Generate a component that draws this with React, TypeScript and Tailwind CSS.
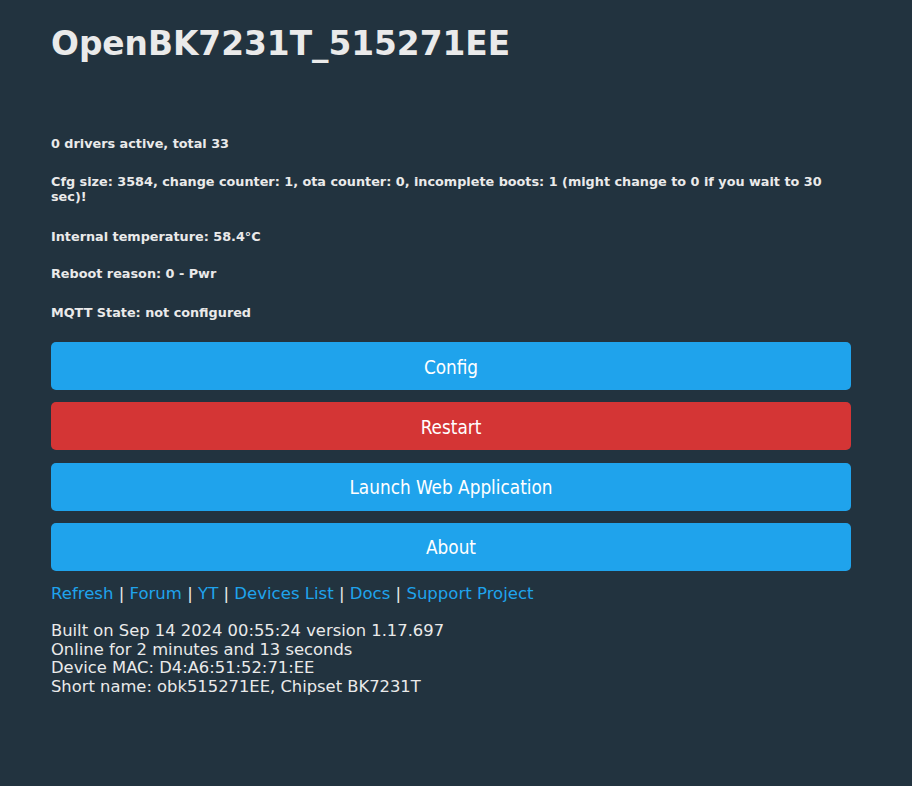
import React from "react";

const sans = { fontFamily: '"DejaVu Sans", Verdana, sans-serif' };
const cond = { fontFamily: '"DejaVu Sans Condensed", "DejaVu Sans", sans-serif' };

function Btn({ label, red }: { label: string; red?: boolean }) {
  return (
    <button
      className={
        "w-full h-[48px] rounded-[5px] text-white text-[18.8px] leading-[48px] pt-[4px] text-center " +
        (red ? "bg-[#d43535]" : "bg-[#1fa3ec]")
      }
      style={cond}
    >
      <span className="block leading-[44px] -mt-[1px]">{label}</span>
    </button>
  );
}

export default function App() {
  const links = ["Refresh", "Forum", "YT", "Devices List", "Docs", "Support Project"];
  return (
    <div className="min-h-[786px] w-full bg-[#22333f] text-[#eaeaea]" style={sans}>
      <div className="ml-[51px] w-[800px] pt-[26px]">
        <h1 className="text-[32.8px] font-bold leading-[37px] text-[#eaeaea]">OpenBK7231T_515271EE</h1>
        <div className="mt-[73px] flex flex-col text-[12.8px] font-bold leading-[15px]">
          <div>0 drivers active, total 33</div>
          <div className="mt-[23px]">
            Cfg size: 3584, change counter: 1, ota counter: 0, incomplete boots: 1 (might change to 0 if you wait to 30 sec)!
          </div>
          <div className="mt-[25px]">Internal temperature: 58.4°C</div>
          <div className="mt-[22px]">Reboot reason: 0 - Pwr</div>
          <div className="mt-[24px]">MQTT State: not configured</div>
        </div>
        <div className="mt-[22px] flex flex-col gap-[12.33px]">
          <Btn label="Config" />
          <Btn label="Restart" red />
          <Btn label="Launch Web Application" />
          <Btn label="About" />
        </div>
        <div className="mt-[13px] text-[16.55px] leading-[19px]">
          {links.map((l, i) => (
            <React.Fragment key={l}>
              {i > 0 && <span> | </span>}
              <a href="#" className="text-[#1fa3ec] no-underline">
                {l}
              </a>
            </React.Fragment>
          ))}
        </div>
        <div className="mt-[19px] text-[16.35px] leading-[18.67px]">
          <div>Built on Sep 14 2024 00:55:24 version 1.17.697</div>
          <div>Online for 2 minutes and 13 seconds</div>
          <div>Device MAC: D4:A6:51:52:71:EE</div>
          <div>Short name: obk515271EE, Chipset BK7231T</div>
        </div>
      </div>
    </div>
  );
}
